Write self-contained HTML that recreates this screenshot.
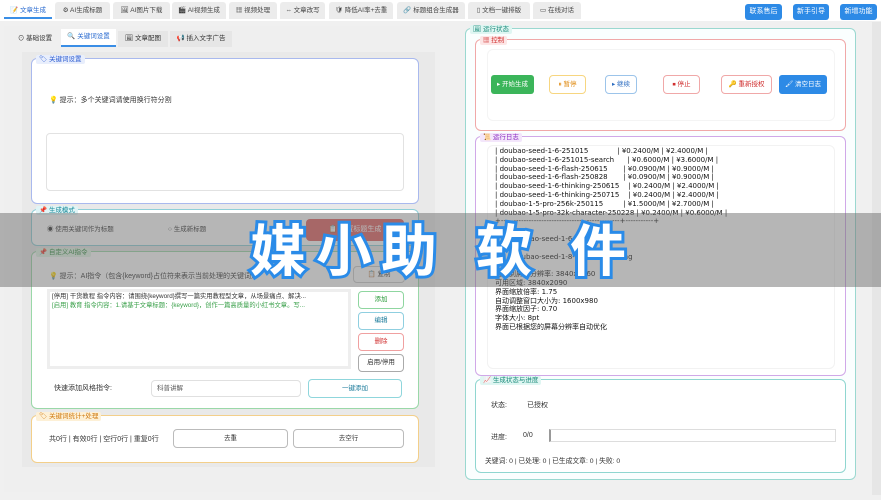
<!DOCTYPE html>
<html><head><meta charset="utf-8"><style>
*{box-sizing:border-box;margin:0;padding:0}
body{width:881px;height:500px;overflow:hidden;background:#fff;font-family:"Liberation Sans","Noto Sans CJK SC",sans-serif;font-size:7px;color:#333;position:relative}
.a{position:absolute}
.tab{position:absolute;top:2px;height:17px;background:#ececec;border-radius:3px 3px 0 0;font-size:6.5px;line-height:17px;text-align:center;color:#444}
.btnb{position:absolute;top:4px;height:16px;background:#2d8ae6;color:#fff;border-radius:3px;font-size:7px;line-height:16px;text-align:center}
.box{position:absolute;border:1px solid;border-radius:6px;background:#fff}
.lbl{position:absolute;left:4px;top:-4px;font-size:6.5px;padding:0 3px;line-height:9px;border-radius:2px}
.b{position:absolute;border:1px solid;border-radius:4px;background:#fff;font-size:6.5px;text-align:center}
.log{line-height:8.8px;color:#111;white-space:pre;font-family:"DejaVu Sans","Noto Sans CJK SC",sans-serif;font-size:7px}
.big{position:absolute;top:216px;font-size:56px;line-height:64px;color:#fff;font-weight:bold;-webkit-text-stroke:6px #2a8be8;paint-order:stroke fill;font-family:"Noto Sans CJK SC",sans-serif}
</style></head><body>
<div class="a" style="left:0;top:21px;width:881px;height:479px;background:#f0f0f0"></div>
<div class="tab" style="left:4px;width:48px;background:#fff;color:#2a6bd0;border-bottom:2px solid #3a8ee6">📝 文章生成</div>
<div class="tab" style="left:55px;width:55px">⚙ AI生成标题</div>
<div class="tab" style="left:113px;width:57px">🖼 AI图片下载</div>
<div class="tab" style="left:172px;width:54px">🎬 AI视频生成</div>
<div class="tab" style="left:229px;width:48px">▦ 视频处理</div>
<div class="tab" style="left:280px;width:45px">⇔ 文章改写</div>
<div class="tab" style="left:329px;width:64px">🛡 降低AI率+去重</div>
<div class="tab" style="left:397px;width:68px">🔗 标题组合生成器</div>
<div class="tab" style="left:468px;width:62px">▯ 文档一键排版</div>
<div class="tab" style="left:533px;width:48px">▭ 在线对话</div>
<div class="btnb" style="left:745px;width:37px">联系售后</div>
<div class="btnb" style="left:793px;width:36px">新手引导</div>
<div class="btnb" style="left:840px;width:37px">新增功能</div>
<div class="a" style="left:872px;top:22px;width:9px;height:473px;background:#e6e6e6"></div>

<!-- left -->
<div class="a" style="left:4px;top:26px;width:436px;height:466px;background:#efefef"></div>
<div class="a" style="left:10px;top:31px;width:50px;height:16px;font-size:6.5px;line-height:16px;text-align:center">⊙ 基础设置</div>
<div class="a" style="left:61px;top:29px;width:55px;height:18px;background:#fff;border-bottom:2px solid #3a8ee6;color:#2a6bd0;font-size:6.5px;line-height:16px;text-align:center">🔍 关键词设置</div>
<div class="a" style="left:118px;top:31px;width:50px;height:16px;background:#e6e6e6;font-size:6.5px;line-height:16px;text-align:center">🖼 文章配图</div>
<div class="a" style="left:170px;top:31px;width:62px;height:16px;background:#e6e6e6;font-size:6.5px;line-height:16px;text-align:center">📢 插入文字广告</div>
<div class="a" style="left:22px;top:52px;width:413px;height:415px;background:#e9e9e9"></div>

<div class="box" style="left:31px;top:58px;width:388px;height:146px;border-color:#a9b9ee">
<div class="lbl" style="background:#e8eefc;color:#2a5bd0">🏷 关键词设置</div>
<div class="a" style="left:17px;top:36px;font-size:7px">💡 提示：多个关键词请使用换行符分割</div>
<div class="a" style="left:14px;top:74px;width:358px;height:58px;border:1px solid #e2e2e2;border-radius:4px"></div>
</div>
<div class="box" style="left:31px;top:209px;width:388px;height:37px;border-color:#8fd0d8">
<div class="lbl" style="background:#dff4f6;color:#1a8a9a">📌 生成模式</div>
<div class="a" style="left:15px;top:13px;font-size:6.5px">◉ 使用关键词作为标题</div>
<div class="a" style="left:136px;top:13px;font-size:6.5px">○ 生成新标题</div>
<div class="a" style="left:274px;top:9px;width:98px;height:22px;background:#e06060;border-radius:4px;color:#fff;font-size:7px;line-height:22px;text-align:center">📋 配置标题生成</div>
</div>
<div class="box" style="left:31px;top:251px;width:388px;height:158px;border-color:#9ad8a8">
<div class="lbl" style="background:#e3f6e7;color:#2a8a3a">📌 自定义AI指令</div>
<div class="a" style="left:17px;top:19px;font-size:7px;white-space:nowrap">💡 提示：AI指令（包含{keyword}占位符来表示当前处理的关键词）</div>
<div class="a" style="left:321px;top:14px;width:52px;height:17px;border:1px solid #ccc;border-radius:4px;font-size:6.5px;line-height:15px;text-align:center">📋 复制</div>
<div class="a" style="left:15px;top:37px;width:304px;height:80px;background:#fff;border:3px solid #eee;font-size:6.3px;line-height:9px;padding:0 2px;white-space:nowrap;overflow:hidden">[停用] 干货教程  指令内容：请围绕{keyword}撰写一篇实用教程型文章，从场景痛点、解决...<br><span style="color:#3aa04a">[启用] 教育  指令内容：1.请基于文章标题：{keyword}，创作一篇高质量的小红书文章。写...</span></div>
<div class="b" style="left:326px;top:39px;width:46px;height:18px;line-height:16px;border-color:#8fd6a0;color:#2a9a3a">添加</div>
<div class="b" style="left:326px;top:60px;width:46px;height:18px;line-height:16px;border-color:#8fcfe0;color:#1a7a9a">编辑</div>
<div class="b" style="left:326px;top:81px;width:46px;height:18px;line-height:16px;border-color:#f0a0a0;color:#d03030">删除</div>
<div class="b" style="left:326px;top:102px;width:46px;height:18px;line-height:16px;border-color:#aaa;color:#333">启用/停用</div>
<div class="a" style="left:22px;top:131px;font-size:7px">快速添加风格指令:</div>
<div class="a" style="left:119px;top:128px;width:150px;height:17px;border:1px solid #e0e0e0;border-radius:4px;background:#fff;font-size:6.5px;line-height:15px;padding-left:5px;color:#555">科普讲解</div>
<div class="b" style="left:276px;top:127px;width:94px;height:19px;line-height:17px;border-color:#8fd6dc;color:#1a7a9a">一键添加</div>
</div>
<div class="box" style="left:31px;top:415px;width:388px;height:48px;border-color:#f3cf8a">
<div class="lbl" style="background:#fdf0d6;color:#d07a10">🏷 关键词统计+处理</div>
<div class="a" style="left:17px;top:18px;font-size:7px">共0行 | 有效0行 | 空行0行 | 重复0行</div>
<div class="b" style="left:141px;top:13px;width:115px;height:19px;line-height:17px;border-color:#bbb;color:#333">去重</div>
<div class="b" style="left:261px;top:13px;width:111px;height:19px;line-height:17px;border-color:#bbb;color:#333">去空行</div>
</div>

<!-- right -->
<div class="box" style="left:465px;top:28px;width:391px;height:452px;border-color:#9ad8d0;background:#fafefe">
<div class="lbl" style="background:#dff6f2;color:#1a8a7a">🖼 运行状态</div>
</div>
<div class="box" style="left:475px;top:39px;width:371px;height:92px;border-color:#f0a8a8;background:#fff">
<div class="lbl" style="background:#fde6e6;color:#d03030">▦ 控制</div>
<div class="a" style="left:11px;top:9px;width:348px;height:72px;border:1px solid #f4f4f4;border-radius:6px"></div>
<div class="a" style="left:15px;top:35px;width:43px;height:19px;background:#3bb55a;border-radius:3px;color:#fff;font-size:6.5px;line-height:19px;text-align:center">▸ 开始生成</div>
<div class="b" style="left:73px;top:35px;width:37px;height:19px;line-height:17px;border-color:#f7d680;color:#e08a10">⏸ 暂停</div>
<div class="b" style="left:129px;top:35px;width:32px;height:19px;line-height:17px;border-color:#9cc4ea;color:#2a6bc0">▸ 继续</div>
<div class="b" style="left:187px;top:35px;width:37px;height:19px;line-height:17px;border-color:#f0a8a8;color:#d03030">⏹ 停止</div>
<div class="b" style="left:245px;top:35px;width:51px;height:19px;line-height:17px;border-color:#f0a8a8;color:#d03030">🔑 重新授权</div>
<div class="a" style="left:303px;top:35px;width:48px;height:19px;background:#2d8ae6;border-radius:3px;color:#fff;font-size:6.5px;line-height:19px;text-align:center">🖌 清空日志</div>
</div>
<div class="box" style="left:475px;top:136px;width:371px;height:240px;border-color:#d0a8e8;background:#fff">
<div class="lbl" style="background:#f3e6fb;color:#8a2ac0">📜 运行日志</div>
<div class="a" style="left:11px;top:8px;width:348px;height:224px;border:1px solid #f2f2f2;border-radius:6px"></div>
<div class="a log" style="left:19px;top:10px">| doubao-seed-1-6-251015             | ¥0.2400/M | ¥2.4000/M |
| doubao-seed-1-6-251015-search      | ¥0.6000/M | ¥3.6000/M |
| doubao-seed-1-6-flash-250615       | ¥0.0900/M | ¥0.9000/M |
| doubao-seed-1-6-flash-250828       | ¥0.0900/M | ¥0.9000/M |
| doubao-seed-1-6-thinking-250615    | ¥0.2400/M | ¥2.4000/M |
| doubao-seed-1-6-thinking-250715    | ¥0.2400/M | ¥2.4000/M |
| doubao-1-5-pro-256k-250115         | ¥1.5000/M | ¥2.7000/M |
| doubao-1-5-pro-32k-character-250228 | ¥0.2400/M | ¥0.6000/M |
+-----------------------------------------------+-----------+

        doubao-seed-1-6-thinking

        doubao-seed-1-8-251228-thinking

检测到屏幕分辨率: 3840x2160
可用区域: 3840x2090
界面缩放倍率: 1.75
自动调整窗口大小为: 1600x980
界面缩放因子: 0.70
字体大小: 8pt
界面已根据您的屏幕分辨率自动优化</div>
</div>
<div class="box" style="left:475px;top:379px;width:371px;height:94px;border-color:#8fd6d0;background:#fff">
<div class="lbl" style="background:#dff6f2;color:#1a8a7a">📈 生成状态与进度</div>
<div class="a" style="left:15px;top:20px;font-size:7px">状态:</div>
<div class="a" style="left:51px;top:20px;font-size:7px">已授权</div>
<div class="a" style="left:15px;top:52px;font-size:7px">进度:</div>
<div class="a" style="left:47px;top:52px;font-size:7px">0/0</div>
<div class="a" style="left:73px;top:49px;width:287px;height:13px;border:1px solid #ddd;border-left:2px solid #999;background:#fff"></div>
<div class="a" style="left:9px;top:75px;font-size:6.8px">关键词: 0 | 已处理: 0 | 已生成文章: 0 | 失败: 0</div>
</div>

<!-- overlay band -->
<div class="a" style="left:0;top:213px;width:881px;height:74px;background:rgba(110,110,110,0.5)"></div>
<div class="big" style="left:250px">媒</div>
<div class="big" style="left:316px">小</div>
<div class="big" style="left:381px">助</div>
<div class="big" style="left:476px">软</div>
<div class="big" style="left:570px">件</div>
</body></html>
